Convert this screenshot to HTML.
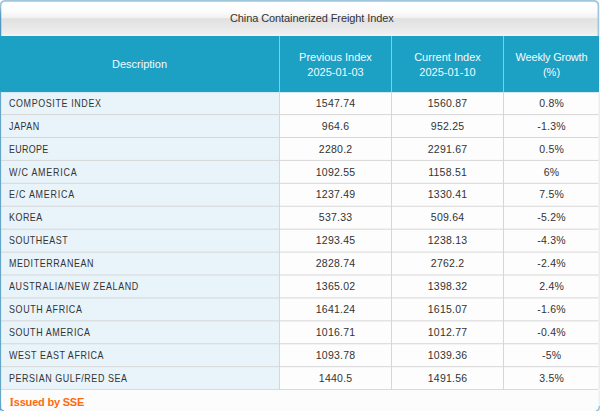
<!DOCTYPE html><html><head><meta charset="utf-8"><style>html,body{margin:0;padding:0;width:600px;height:411px;overflow:hidden;background:#fff}.t{position:absolute;font-family:"Liberation Sans",sans-serif;font-size:11px;line-height:14px;white-space:nowrap;color:#333}.c{text-align:center}.h{color:#f4fbfd}.u{transform-origin:0 50%}.d{font-size:10.5px} .n{letter-spacing:0.25px}</style></head><body>
<svg width="600" height="411" style="position:absolute;left:0;top:0"><defs><linearGradient id="cg" x1="0" y1="0" x2="0" y2="1"><stop offset="0" stop-color="#ffffff"/><stop offset="0.3" stop-color="#fcfcfc"/><stop offset="0.47" stop-color="#f1f1f1"/><stop offset="0.5" stop-color="#e1e1e1"/><stop offset="0.93" stop-color="#eeeeee"/><stop offset="0.96" stop-color="#f5f2f0"/><stop offset="1" stop-color="#f5f2f0"/></linearGradient><linearGradient id="lg" x1="0" y1="0" x2="0" y2="1"><stop offset="0" stop-color="#9fc6dc"/><stop offset="0.3" stop-color="#5b9cc3"/><stop offset="1" stop-color="#4496c2"/></linearGradient></defs><rect x="0" y="0" width="600" height="411" fill="#ffffff"/><path d="M1,36 L1,6 Q1,1.5 6,1.5 L593,1.5 Q598,1.5 598,6 L598,36 Z" fill="url(#cg)"/><path d="M598.4,36 L598.4,5.5 Q598.4,0.85 593.5,0.85 L5.5,0.85 Q0.65,0.85 0.65,5.5" fill="none" stroke="#9fc6dc" stroke-width="1.7"/><rect x="0" y="5" width="1.25" height="31" fill="url(#lg)"/><rect x="0" y="36.0" width="599" height="56.0" fill="#1ca0c4"/><rect x="279.0" y="36.0" width="1" height="56.0" fill="#9fc3cd"/><rect x="391.0" y="36.0" width="1" height="56.0" fill="#9fc3cd"/><rect x="503.0" y="36.0" width="1" height="56.0" fill="#9fc3cd"/><rect x="0" y="92.0" width="279.5" height="297.58" fill="#e8f3fa"/><rect x="279.5" y="92.0" width="319.0" height="297.58" fill="#fdfdfd"/><rect x="0" y="92.0" width="598.5" height="1" fill="#d3eaf3"/><rect x="0" y="114.080" width="598.5" height="1" fill="#d7d7d7"/><rect x="0" y="136.997" width="598.5" height="1" fill="#d7d7d7"/><rect x="0" y="159.913" width="598.5" height="1" fill="#d7d7d7"/><rect x="0" y="182.830" width="598.5" height="1" fill="#d7d7d7"/><rect x="0" y="205.747" width="598.5" height="1" fill="#d7d7d7"/><rect x="0" y="228.663" width="598.5" height="1" fill="#d7d7d7"/><rect x="0" y="251.580" width="598.5" height="1" fill="#d7d7d7"/><rect x="0" y="274.497" width="598.5" height="1" fill="#d7d7d7"/><rect x="0" y="297.413" width="598.5" height="1" fill="#d7d7d7"/><rect x="0" y="320.330" width="598.5" height="1" fill="#d7d7d7"/><rect x="0" y="343.247" width="598.5" height="1" fill="#d7d7d7"/><rect x="0" y="366.163" width="598.5" height="1" fill="#d7d7d7"/><rect x="0" y="389.080" width="598.5" height="1" fill="#d7d7d7"/><rect x="279.0" y="92.0" width="1" height="297.58" fill="#d7d7d7"/><rect x="391.0" y="92.0" width="1" height="297.58" fill="#d7d7d7"/><rect x="503.0" y="92.0" width="1" height="297.58" fill="#d7d7d7"/><rect x="599" y="36.0" width="1" height="56.0" fill="#f4f1f1"/><rect x="598.5" y="92.0" width="1.5" height="297.58" fill="#ececec"/><rect x="0" y="390.080" width="598.5" height="21.420000000000016" fill="#fcfcfc"/><rect x="598.5" y="390.080" width="1.5" height="21.420000000000016" fill="#e6f1f7"/><path d="M0.55,404 L0.55,407 Q0.55,410.6 4,410.8" stroke="#66a6c8" stroke-width="1.1" fill="none"/><path d="M599.3,406 Q599.3,410.6 596,410.8" stroke="#8fbfd8" stroke-width="1.3" fill="none"/><rect x="0" y="91.5" width="1.1" height="319.0" fill="#66a6c8"/></svg>
<div class="t" style="left:230px;top:11px;letter-spacing:-0.1px">China Containerized Freight Index</div>
<div class="t c h" style="left:0;width:279px;top:57px">Description</div>
<div class="t c h" style="left:280px;width:111px;top:50px;line-height:15px">Previous Index<br>2025-01-03</div>
<div class="t c h" style="left:392px;width:111px;top:50px;line-height:15px">Current Index<br>2025-01-10</div>
<div class="t c h" style="left:504px;width:95px;top:50px;line-height:15px"><span style="letter-spacing:-0.2px">Weekly Growth</span><br>(%)</div>
<div class="t u d" style="left:8.6px;top:95.83px;transform:scaleX(0.85);letter-spacing:0.725px">COMPOSITE INDEX</div>
<div class="t c d n" style="left:280.12px;width:111px;top:95.83px">1547.74</div>
<div class="t c d n" style="left:392.12px;width:111px;top:95.83px">1560.87</div>
<div class="t c d n" style="left:504.12px;width:95px;top:95.83px">0.8%</div>
<div class="t u d" style="left:8.6px;top:118.75px;transform:scaleX(0.85);letter-spacing:0.626px">JAPAN</div>
<div class="t c d n" style="left:280.12px;width:111px;top:118.75px">964.6</div>
<div class="t c d n" style="left:392.12px;width:111px;top:118.75px">952.25</div>
<div class="t c d n" style="left:504.12px;width:95px;top:118.75px">-1.3%</div>
<div class="t u d" style="left:8.6px;top:141.66px;transform:scaleX(0.85);letter-spacing:0.356px">EUROPE</div>
<div class="t c d n" style="left:280.12px;width:111px;top:141.66px">2280.2</div>
<div class="t c d n" style="left:392.12px;width:111px;top:141.66px">2291.67</div>
<div class="t c d n" style="left:504.12px;width:95px;top:141.66px">0.5%</div>
<div class="t u d" style="left:8.6px;top:164.58px;transform:scaleX(0.85);letter-spacing:0.894px">W/C AMERICA</div>
<div class="t c d n" style="left:280.12px;width:111px;top:164.58px">1092.55</div>
<div class="t c d n" style="left:392.12px;width:111px;top:164.58px">1158.51</div>
<div class="t c d n" style="left:504.12px;width:95px;top:164.58px">6%</div>
<div class="t u d" style="left:8.6px;top:187.49px;transform:scaleX(0.85);letter-spacing:0.895px">E/C AMERICA</div>
<div class="t c d n" style="left:280.12px;width:111px;top:187.49px">1237.49</div>
<div class="t c d n" style="left:392.12px;width:111px;top:187.49px">1330.41</div>
<div class="t c d n" style="left:504.12px;width:95px;top:187.49px">7.5%</div>
<div class="t u d" style="left:8.6px;top:210.41px;transform:scaleX(0.85);letter-spacing:0.599px">KOREA</div>
<div class="t c d n" style="left:280.12px;width:111px;top:210.41px">537.33</div>
<div class="t c d n" style="left:392.12px;width:111px;top:210.41px">509.64</div>
<div class="t c d n" style="left:504.12px;width:95px;top:210.41px">-5.2%</div>
<div class="t u d" style="left:8.6px;top:233.33px;transform:scaleX(0.85);letter-spacing:0.597px">SOUTHEAST</div>
<div class="t c d n" style="left:280.12px;width:111px;top:233.33px">1293.45</div>
<div class="t c d n" style="left:392.12px;width:111px;top:233.33px">1238.13</div>
<div class="t c d n" style="left:504.12px;width:95px;top:233.33px">-4.3%</div>
<div class="t u d" style="left:8.6px;top:256.24px;transform:scaleX(0.85);letter-spacing:0.697px">MEDITERRANEAN</div>
<div class="t c d n" style="left:280.12px;width:111px;top:256.24px">2828.74</div>
<div class="t c d n" style="left:392.12px;width:111px;top:256.24px">2762.2</div>
<div class="t c d n" style="left:504.12px;width:95px;top:256.24px">-2.4%</div>
<div class="t u d" style="left:8.6px;top:279.16px;transform:scaleX(0.85);letter-spacing:0.751px">AUSTRALIA/NEW ZEALAND</div>
<div class="t c d n" style="left:280.12px;width:111px;top:279.16px">1365.02</div>
<div class="t c d n" style="left:392.12px;width:111px;top:279.16px">1398.32</div>
<div class="t c d n" style="left:504.12px;width:95px;top:279.16px">2.4%</div>
<div class="t u d" style="left:8.6px;top:302.08px;transform:scaleX(0.85);letter-spacing:0.742px">SOUTH AFRICA</div>
<div class="t c d n" style="left:280.12px;width:111px;top:302.08px">1641.24</div>
<div class="t c d n" style="left:392.12px;width:111px;top:302.08px">1615.07</div>
<div class="t c d n" style="left:504.12px;width:95px;top:302.08px">-1.6%</div>
<div class="t u d" style="left:8.6px;top:324.99px;transform:scaleX(0.85);letter-spacing:0.693px">SOUTH AMERICA</div>
<div class="t c d n" style="left:280.12px;width:111px;top:324.99px">1016.71</div>
<div class="t c d n" style="left:392.12px;width:111px;top:324.99px">1012.77</div>
<div class="t c d n" style="left:504.12px;width:95px;top:324.99px">-0.4%</div>
<div class="t u d" style="left:8.6px;top:347.91px;transform:scaleX(0.85);letter-spacing:0.662px">WEST EAST AFRICA</div>
<div class="t c d n" style="left:280.12px;width:111px;top:347.91px">1093.78</div>
<div class="t c d n" style="left:392.12px;width:111px;top:347.91px">1039.36</div>
<div class="t c d n" style="left:504.12px;width:95px;top:347.91px">-5%</div>
<div class="t u d" style="left:8.6px;top:370.83px;transform:scaleX(0.85);letter-spacing:0.670px">PERSIAN GULF/RED SEA</div>
<div class="t c d n" style="left:280.12px;width:111px;top:370.83px">1440.5</div>
<div class="t c d n" style="left:392.12px;width:111px;top:370.83px">1491.56</div>
<div class="t c d n" style="left:504.12px;width:95px;top:370.83px">3.5%</div>
<div class="t" style="left:9.5px;top:395px;font-weight:bold;color:#ff6a10;letter-spacing:-0.2px"><span style="font-family:'Liberation Serif',serif;font-size:11.5px">I</span>ssued by SSE</div>
</body></html>
